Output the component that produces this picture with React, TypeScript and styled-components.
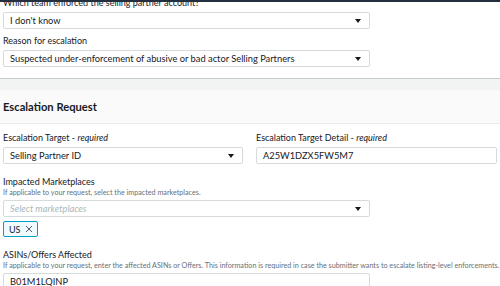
import styled, { createGlobalStyle } from "styled-components";

const GlobalStyle = createGlobalStyle`
  html, body {
    margin: 0;
    padding: 0;
    background: #ffffff;
    font-family: Lato, "Noto Sans", sans-serif;
    color: #16191f;
  }
`;

const TopEdge = styled.div`
  position: fixed;
  z-index: 10;
  top: 0;
  left: 0;
  right: 0;
  height: 2px;
  background-color: #232f3e;
`;

const Page = styled.div`
  width: 500px;
  overflow: hidden;
`;

const Section = styled.section<{ $first?: boolean }>`
  display: flex;
  flex-direction: column;
  gap: ${(p) => (p.$first ? "6px" : "12px")};
  padding: ${(p) => (p.$first ? "0 3px 11px" : "8px 3px 0")};
  margin-top: ${(p) => (p.$first ? "-3px" : "0")};
  border-bottom: ${(p) => (p.$first ? "1px solid #c6cccc" : "none")};
`;

const Spacer = styled.div`
  height: 11px;
  background-color: #f2f3f3;
`;

const Header = styled.div`
  height: 33px;
  display: flex;
  align-items: center;
  padding: 0 3px;
  background-color: #fafafa;
  border-bottom: 1px solid #eaeded;
  font-size: 11.2px;
  font-weight: 700;
`;

const Row = styled.div`
  display: grid;
  grid-template-columns: 240px 241px;
  column-gap: 13px;
`;

const Field = styled.div`
  display: flex;
  flex-direction: column;
`;

const Label = styled.div<{ $desc?: boolean }>`
  font-size: 9px;
  line-height: 12px;
  margin-bottom: ${(p) => (p.$desc ? "0" : "3px")};
  white-space: nowrap;

  > em {
    font-style: italic;
  }
`;

const Desc = styled.div`
  font-size: 7.2px;
  line-height: 10px;
  color: #687078;
  margin-bottom: 2px;
  white-space: nowrap;
`;

const Control = styled.div<{ $width?: number; $placeholder?: boolean }>`
  box-sizing: border-box;
  width: ${(p) => (p.$width ? `${p.$width}px` : "100%")};
  height: 17px;
  display: flex;
  align-items: center;
  justify-content: space-between;
  padding: 0 8px 0 6px;
  border: 1px solid #d5dbdb;
  border-radius: 2px;
  background: #ffffff;
  font-size: 9.3px;
  color: ${(p) => (p.$placeholder ? "#aab7b8" : "#16191f")};
  font-style: ${(p) => (p.$placeholder ? "italic" : "normal")};
`;

const Caret = styled.span`
  width: 0;
  height: 0;
  border-left: 3.5px solid transparent;
  border-right: 3.5px solid transparent;
  border-top: 4px solid #16191f;
`;

const Tokens = styled.div`
  display: flex;
  margin-top: 4px;
`;

const Token = styled.div`
  box-sizing: border-box;
  height: 16px;
  display: flex;
  align-items: center;
  gap: 4px;
  padding: 0 4px 0 5px;
  border: 1px solid #00a1c9;
  border-radius: 2px;
  background-color: #f1faff;
  font-size: 9px;
`;

function Select({ value, width, placeholder }: { value: string; width?: number; placeholder?: boolean }) {
  return (
    <Control $width={width} $placeholder={placeholder}>
      <span>{value}</span>
      <Caret />
    </Control>
  );
}

export default function App() {
  return (
    <>
      <GlobalStyle />
      <TopEdge />
      <Page>
        <Section $first>
          <Field>
            <Label>Which team enforced the selling partner account?</Label>
            <Select value="I don't know" width={367} />
          </Field>
          <Field>
            <Label>Reason for escalation</Label>
            <Select value="Suspected under-enforcement of abusive or bad actor Selling Partners" width={367} />
          </Field>
        </Section>
        <Spacer />
        <Header>Escalation Request</Header>
        <Section>
          <Row>
            <Field>
              <Label>
                Escalation Target - <em>required</em>
              </Label>
              <Select value="Selling Partner ID" />
            </Field>
            <Field>
              <Label>
                Escalation Target Detail - <em>required</em>
              </Label>
              <Control>A25W1DZX5FW5M7</Control>
            </Field>
          </Row>
          <Field>
            <Label $desc>Impacted Marketplaces</Label>
            <Desc>If applicable to your request, select the impacted marketplaces.</Desc>
            <Select value="Select marketplaces" width={367} placeholder />
            <Tokens>
              <Token>
                <span>US</span>
                <svg width="8" height="8" viewBox="0 0 8 8">
                  <path d="M1 1 L7 7 M7 1 L1 7" stroke="#545b64" strokeWidth="1" fill="none" />
                </svg>
              </Token>
            </Tokens>
          </Field>
          <Field>
            <Label $desc>ASINs/Offers Affected</Label>
            <Desc>
              If applicable to your request, enter the affected ASINs or Offers. This information is required in case the
              submitter wants to escalate listing-level enforcements.
            </Desc>
            <Control $width={367}>B01M1LQINP</Control>
          </Field>
        </Section>
      </Page>
    </>
  );
}
